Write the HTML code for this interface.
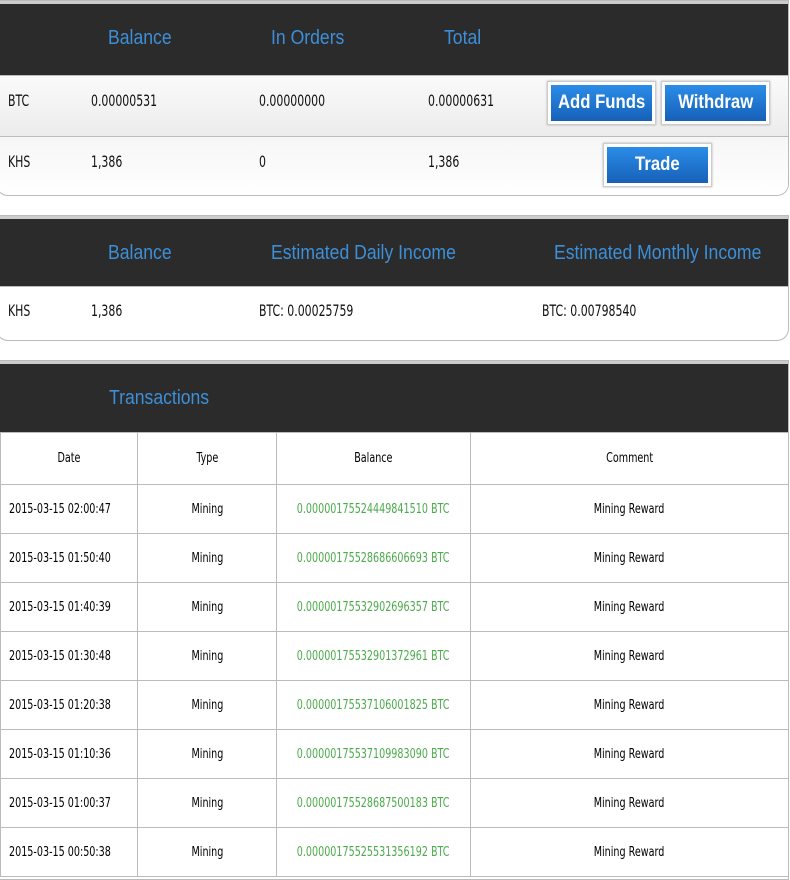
<!DOCTYPE html>
<html><head><style>
*{margin:0;padding:0;box-sizing:border-box}
body{width:790px;height:870px;overflow:hidden;background:#fff;font-family:"DejaVu Sans Condensed","Liberation Sans",sans-serif;position:relative}
.panel{position:absolute;left:-4px;width:793px;border:1px solid #bbb;border-radius:0 0 12px 12px;background:#fff;overflow:hidden}
.hd{background:#2b2b2b;border-top:3px solid #ccc;position:relative;color:#3d8fd8;font-family:"Liberation Sans",sans-serif;font-size:20px}
.hd span{position:absolute;top:23px;transform:scaleX(.88);transform-origin:left;white-space:nowrap}
.row{position:relative;font-size:16px;color:#111;border-top:1px solid #bbb}
.row span{position:absolute;top:15px;transform:scaleX(.76);transform-origin:left;white-space:nowrap}
.btn{position:absolute;background:#fff;border:1px solid #ccc;padding:3px;box-shadow:0 0 2px #aaa}
.btn div{background:linear-gradient(#2b8de8,#1660b8);color:#fff;font-family:"Liberation Sans",sans-serif;font-weight:bold;font-size:19px;text-align:center;line-height:36px;height:36px}
.btn b{display:inline-block;transform:scaleX(.88)}
table{position:absolute;left:0;top:432px;width:789px;border-collapse:collapse;font-size:13px}
td{border:1px solid #bbb;text-align:center;height:49px;white-space:nowrap}
td i{font-style:normal;display:inline-block;transform:scaleX(.82)}
td.d{text-align:left;padding-left:8px}
td.d i{transform-origin:left}
td.g{color:#4caa4c}
tr:first-child td{height:52px}
</style></head><body>
<div class="panel" style="top:0;height:196px">
 <div class="hd" style="height:74px"><span style="left:111px">Balance</span><span style="left:274px">In Orders</span><span style="left:447px">Total</span></div>
 <div class="row" style="height:61px;background:linear-gradient(#fafafa,#ececec)"><span style="left:11px">BTC</span><span style="left:94px">0.00000531</span><span style="left:262px">0.00000000</span><span style="left:431px">0.00000631</span>
  <div class="btn" style="left:550px;top:5px;width:109px"><div><b>Add Funds</b></div></div>
  <div class="btn" style="left:664px;top:5px;width:109px"><div><b>Withdraw</b></div></div></div>
 <div class="row" style="height:61px;background:linear-gradient(#f6f6f6,#fff)"><span style="left:11px">KHS</span><span style="left:94px">1,386</span><span style="left:262px">0</span><span style="left:431px">1,386</span>
  <div class="btn" style="left:606px;top:6px;width:109px"><div><b>Trade</b></div></div></div>
</div>
<div class="panel" style="top:215px;height:126px">
 <div class="hd" style="height:70px"><span style="left:111px">Balance</span><span style="left:274px">Estimated Daily Income</span><span style="left:557px">Estimated Monthly Income</span></div>
 <div class="row" style="height:55px"><span style="left:11px;top:14px">KHS</span><span style="left:94px;top:14px">1,386</span><span style="left:262px;top:14px">BTC: 0.00025759</span><span style="left:545px;top:14px">BTC: 0.00798540</span></div>
</div>
<div class="panel" style="top:360px;height:520px;border-radius:0">
 <div class="hd" style="height:72px"><span style="left:112px;top:23px">Transactions</span></div>
</div>
<table>
<tr><td style="width:137px"><i>Date</i></td><td style="width:139px"><i>Type</i></td><td style="width:194px"><i>Balance</i></td><td><i>Comment</i></td></tr>
<tr><td class="d"><i>2015-03-15 02:00:47</i></td><td><i>Mining</i></td><td class="g"><i>0.00000175524449841510 BTC</i></td><td><i>Mining Reward</i></td></tr>
<tr><td class="d"><i>2015-03-15 01:50:40</i></td><td><i>Mining</i></td><td class="g"><i>0.00000175528686606693 BTC</i></td><td><i>Mining Reward</i></td></tr>
<tr><td class="d"><i>2015-03-15 01:40:39</i></td><td><i>Mining</i></td><td class="g"><i>0.00000175532902696357 BTC</i></td><td><i>Mining Reward</i></td></tr>
<tr><td class="d"><i>2015-03-15 01:30:48</i></td><td><i>Mining</i></td><td class="g"><i>0.00000175532901372961 BTC</i></td><td><i>Mining Reward</i></td></tr>
<tr><td class="d"><i>2015-03-15 01:20:38</i></td><td><i>Mining</i></td><td class="g"><i>0.00000175537106001825 BTC</i></td><td><i>Mining Reward</i></td></tr>
<tr><td class="d"><i>2015-03-15 01:10:36</i></td><td><i>Mining</i></td><td class="g"><i>0.00000175537109983090 BTC</i></td><td><i>Mining Reward</i></td></tr>
<tr><td class="d"><i>2015-03-15 01:00:37</i></td><td><i>Mining</i></td><td class="g"><i>0.00000175528687500183 BTC</i></td><td><i>Mining Reward</i></td></tr>
<tr><td class="d"><i>2015-03-15 00:50:38</i></td><td><i>Mining</i></td><td class="g"><i>0.00000175525531356192 BTC</i></td><td><i>Mining Reward</i></td></tr>
</table>
</body></html>
